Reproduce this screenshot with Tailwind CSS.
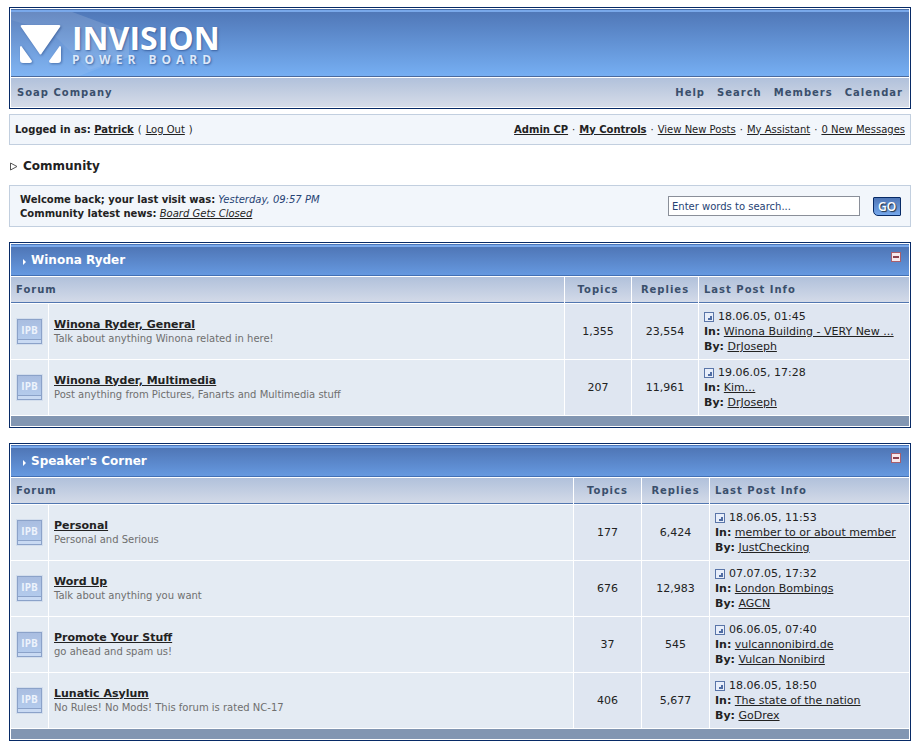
<!DOCTYPE html>
<html lang="en">
<head>
<meta charset="utf-8">
<meta name="viewport" content="width=device-width, initial-scale=1">
<title>Soap Company - Community</title>
<script src="https://cdn.jsdelivr.net/npm/@tailwindcss/browser@4"></script>
</head>
<body class="bg-white px-[9px] pt-[7px] font-['Verdana','DejaVu_Sans',sans-serif] text-[11px] leading-[14px] text-[#222]">
<svg class="absolute h-0 w-0" aria-hidden="true">
  <defs>
    <linearGradient id="ipbFill" x1="0" y1="0" x2="0" y2="1"><stop offset="0" stop-color="#a9bde0"/><stop offset="1" stop-color="#b6ceef"/></linearGradient>
  </defs>
  <symbol id="post" viewBox="0 0 10 10"><rect x=".5" y=".5" width="9" height="9" fill="#e8eefa" stroke="#5a75a8"/><path d="M6 4h2v4H4V6h2z" fill="#4f6ca3"/></symbol>
</svg>

<header class="border border-[#072a66] p-px">
  <div class="relative h-[68px] overflow-hidden border-y border-t-[#4a6fa8] border-b-[#4b6a9c] bg-linear-to-b from-[#4f76b6] to-[#76aff3]">
    <svg class="absolute left-0 top-0" width="130" height="66" aria-hidden="true"><path d="M0 0H56L118 23V47L68 66H0Z" fill="#fff" fill-opacity=".08"/><path d="M0 0H56L118 23V47L78 60L40 22L0 10Z" fill="#fff" fill-opacity=".07"/></svg>
    <div class="absolute inset-x-0 top-0 h-[2px] bg-[#79a8ea]"></div>
    <a href="#" class="relative flex items-start gap-[11px] pl-[9px] pt-[13px] text-white" aria-label="Invision Power Board">
      <svg class="mt-[2px] shrink-0 drop-shadow-[1px_1px_1px_rgba(30,60,120,.5)]" width="41" height="38" viewBox="0 0 41 38" aria-hidden="true"><path d="M2 0H39Q41 0 40 2L22 28Q20.500 31 19 28L1 2Q0 0 2 0ZM0 22Q1 20 2 22L12 36Q12 38 10 38H3Q0 38 0 35ZM41 22Q40 20 39 22L29 36Q29 38 31 38H38Q41 38 41 35Z" fill="#fff"/></svg>
      <span class="flex flex-col [text-shadow:1px_1px_2px_rgba(30,60,120,.6)]">
        <span class="font-['Open_Sans',sans-serif] text-[32px] font-bold leading-[30px]">INVISION</span>
        <span class="font-['Open_Sans',sans-serif] text-[12px] font-bold leading-[14px] tracking-[5px] text-[#dce8fa]">POWER BOARD</span>
      </span>
    </a>
  </div>
  <nav class="mt-px flex h-[29px] items-center justify-between bg-linear-to-b from-[#b1c1db] to-[#d6dce8] px-[6px] text-[10px] font-bold tracking-[1px] text-[#3a4f6c]">
    <a href="#">Soap Company</a>
    <div class="flex gap-[12px]"><a href="#">Help</a><a href="#">Search</a><a href="#">Members</a><a href="#">Calendar</a></div>
  </nav>
</header>

<section class="mt-[5px] flex h-[31px] items-center justify-between border border-[#c2cfdf] bg-[#f2f6fb] px-[5px] text-[10px]">
  <p class="flex gap-[4px]"><b>Logged in as: <a href="#" class="underline">Patrick</a></b> ( <a href="#" class="underline">Log Out</a> )</p>
  <p class="flex gap-[4px]"><a href="#" class="font-bold underline">Admin CP</a> · <a href="#" class="font-bold underline">My Controls</a> · <a href="#" class="underline">View New Posts</a> · <a href="#" class="underline">My Assistant</a> · <a href="#" class="underline">0 New Messages</a></p>
</section>

<h1 class="mt-[13px] flex h-[16px] items-center gap-[5px] text-[12px] font-bold">
  <svg width="9" height="9" viewBox="0 0 9 9" aria-hidden="true"><path d="M1.500 1L8 4.500L1.500 8Z" fill="none" stroke="#555"/></svg>Community
</h1>

<section class="mt-[11px] flex h-[42px] items-center justify-between border border-[#c2cfdf] bg-[#f2f6fb] pl-[10px] pr-[9px] text-[10px]">
  <div class="pt-px">
    <p><b>Welcome back; your last visit was:</b> <i class="text-[#264374]">Yesterday, 09:57 PM</i></p>
    <p><b>Community latest news:</b> <a href="#" class="italic underline">Board Gets Closed</a></p>
  </div>
  <form class="flex items-center gap-[13px]">
    <input type="text" aria-label="Search" value="Enter words to search..." class="h-[20px] w-[192px] border border-[#8a8f99] bg-white px-[3px] text-[10px] text-[#264374]">
    <button type="button" class="h-[19px] w-[28px] rounded-[1px] rounded-bl-[5px] border border-[#072a66] bg-linear-to-b from-[#4f76b6] to-[#76a8ec] font-['Open_Sans',sans-serif] text-[12px] font-semibold leading-[17px] text-white [text-shadow:1px_1px_1px_#234]">GO</button>
  </form>
</section>

<main id="boards"></main>

<script>
const categories = [
  { name: "Winona Ryder", cols: [66, 66, 210], forums: [
    ["Winona Ryder, General", "Talk about anything Winona related in here!", "1,355", "23,554", "18.06.05, 01:45", "Winona Building - VERY New ...", "DrJoseph"],
    ["Winona Ryder, Multimedia", "Post anything from Pictures, Fanarts and Multimedia stuff", "207", "11,961", "19.06.05, 17:28", "Kim...", "DrJoseph"]
  ]},
  { name: "Speaker's Corner", cols: [67, 67, 199], forums: [
    ["Personal", "Personal and Serious", "177", "6,424", "18.06.05, 11:53", "member to or about member", "JustChecking"],
    ["Word Up", "Talk about anything you want", "676", "12,983", "07.07.05, 17:32", "London Bombings", "AGCN"],
    ["Promote Your Stuff", "go ahead and spam us!", "37", "545", "06.06.05, 07:40", "vulcannonibird.de", "Vulcan Nonibird"],
    ["Lunatic Asylum", "No Rules! No Mods! This forum is rated NC-17", "406", "5,677", "18.06.05, 18:50", "The state of the nation", "GoDrex"]
  ]}
];

const forumIcon = `<svg class="mx-auto" width="27" height="27" viewBox="0 0 27 27" role="img" aria-label="Forum">
  <rect x=".5" y=".5" width="26" height="26" fill="none" stroke="#d3deed"/>
  <rect x="1.500" y="1.500" width="24" height="24" fill="url(#ipbFill)" stroke="#8ba2c9"/>
  <rect x="2" y="22" width="23" height="3" fill="#c9daf3"/><path d="M2 21.500H25" stroke="#8ba2c9"/>
  <text x="13.500" y="16" text-anchor="middle" font-family="Open Sans" font-size="10" font-weight="700" fill="#edf3fc">IPB</text></svg>`;

const row = ([name, about, topics, replies, date, topic, author]) => `
  <tr class="h-[55px]">
    <td class="bg-[#e4ebf3]">${forumIcon}</td>
    <td class="bg-[#e4ebf3] px-[5px]">
      <a href="#" class="font-bold underline">${name}</a>
      <p class="text-[10px] text-[#6f6f6f]">${about}</p>
    </td>
    <td class="bg-[#dfe6f1] text-center">${topics}</td>
    <td class="bg-[#dfe6f1] text-center">${replies}</td>
    <td class="whitespace-nowrap bg-[#dfe6f1] px-[5px] leading-[15px]">
      <p class="flex items-center gap-[4px]"><svg width="10" height="10" aria-hidden="true"><use href="#post"/></svg>${date}</p>
      <p><b>In:</b> <a href="#" class="underline">${topic}</a></p>
      <p><b>By:</b> <a href="#" class="underline">${author}</a></p>
    </td>
  </tr>`;

document.getElementById("boards").innerHTML = categories.map(c => `
  <section class="mt-[15px] border border-[#072a66]">
    <div class="mx-px mt-px border-y border-t-[#4a76ba] border-b-[#4370b4]">
      <div class="flex h-[30px] items-center justify-between border-t-2 border-[#79a8ea] bg-linear-to-b from-[#4f76b6] to-[#6699e0] pl-[12px] pr-[8px]">
        <h2 class="mb-[2px] flex items-center gap-[5px] text-[12px] font-bold text-white">
          <svg class="mt-[3px]" width="3" height="6" viewBox="0 0 3 6" aria-hidden="true"><path d="M0 0L3 3L0 6Z" fill="#fff"/></svg>${c.name}
        </h2>
        <button type="button" class="mb-[8px]" aria-label="Collapse ${c.name}"><svg width="10" height="10" viewBox="0 0 10 10" aria-hidden="true"><rect x=".5" y=".5" width="9" height="9" fill="#f8e9ec" stroke="#a85f6c"/><path d="M2 5H8" stroke="#8c4350" stroke-width="2"/></svg></button>
      </div>
    </div>
    <table class="w-full table-fixed border-separate border-spacing-px">
      <colgroup><col class="w-[37px]"><col>${c.cols.map(w => `<col style="width:${w}px">`).join("")}</colgroup>
      <thead>
        <tr class="h-[26px] text-[10px] text-[#3a4f6c] tracking-[1px] *:border-b *:border-[#5176b0] *:bg-linear-to-b *:from-[#b1c1db] *:to-[#d3dae8]">
          <th colspan="2" class="px-[5px] text-left">Forum</th><th>Topics</th><th>Replies</th><th class="px-[5px] text-left">Last Post Info</th>
        </tr>
      </thead>
      <tbody>${c.forums.map(row).join("")}</tbody>
      <tfoot><tr class="h-[10px]"><td colspan="5" class="bg-[#8296b2]"></td></tr></tfoot>
    </table>
  </section>`).join("");
</script>
</body>
</html>
